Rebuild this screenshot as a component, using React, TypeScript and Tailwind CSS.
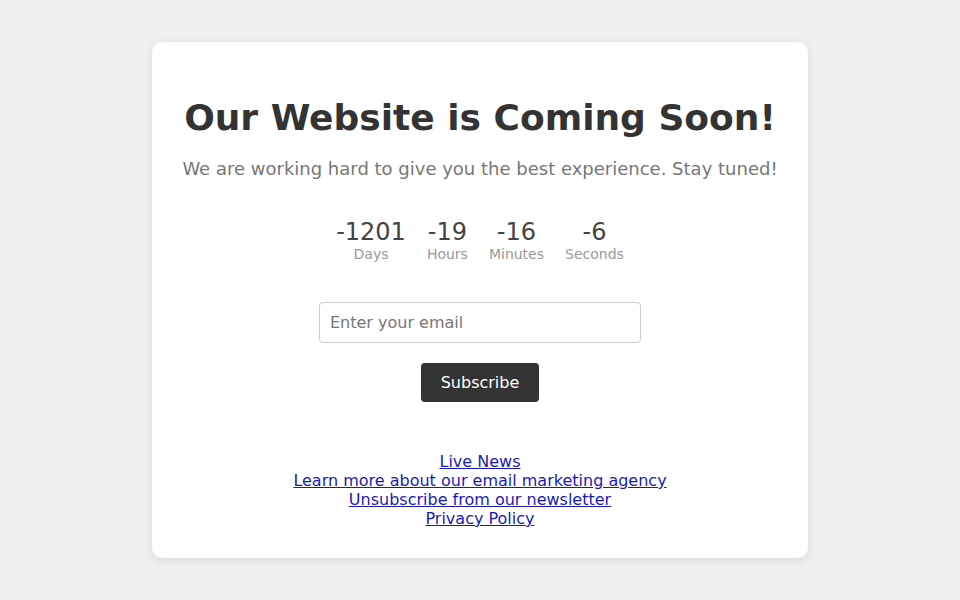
const countdown = [
  { value: -1201, label: "Days" },
  { value: -19, label: "Hours" },
  { value: -16, label: "Minutes" },
  { value: -6, label: "Seconds" },
]

const links = [
  "Live News",
  "Learn more about our email marketing agency",
  "Unsubscribe from our newsletter",
  "Privacy Policy",
]

export default function App() {
  return (
    <div className="min-h-screen bg-[#f0f0f0] font-['DejaVu_Sans',sans-serif] pt-[42px]">
      <div className="mx-auto w-[656px] rounded-[10px] bg-white shadow-[0_2px_10px_rgba(0,0,0,0.1)] flex flex-col items-center text-center pt-[55px] pb-[30px]">
        <h1 className="text-[36px] font-bold leading-[42px] text-[#333]">Our Website is Coming Soon!</h1>
        <p className="mt-[19px] text-[18px] leading-[21px] text-[#777]">
          We are working hard to give you the best experience. Stay tuned!
        </p>

        <div className="mt-[39px] flex gap-[21px]">
          {countdown.map(item => (
            <div key={item.label} className="flex flex-col items-center">
              <span className="text-[24px] leading-[28px] text-[#444]">{item.value}</span>
              <span className="text-[14px] leading-[16px] text-[#999]">{item.label}</span>
            </div>
          ))}
        </div>

        <input
          type="email"
          placeholder="Enter your email"
          className="mt-[40px] w-[322px] h-[41px] rounded-[4px] border border-[#ccc] px-[10px] text-[16px] text-[#333] placeholder:text-[#777] outline-none"
        />
        <button className="mt-[20px] h-[39px] w-[118px] rounded-[4px] bg-[#333] text-[16px] text-white">
          Subscribe
        </button>

        <div className="mt-[50px] flex flex-col items-center text-[16px] leading-[19px]">
          {links.map(link => (
            <a key={link} href="#" className="text-[#1a1ab8] underline">
              {link}
            </a>
          ))}
        </div>
      </div>
    </div>
  )
}
